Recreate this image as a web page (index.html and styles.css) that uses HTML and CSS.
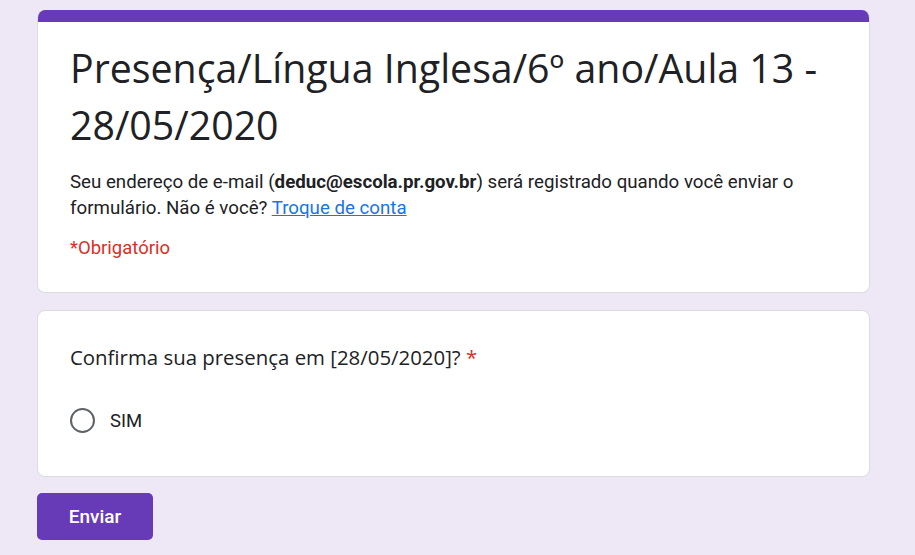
FILE: index.html
```html
<!DOCTYPE html>
<html lang="pt-BR">
<head>
<meta charset="utf-8">
<title>Presença/Língua Inglesa/6º ano/Aula 13 - 28/05/2020</title>
<link rel="stylesheet" href="styles.css">
</head>
<body>
<main class="form">
  <section class="card header-card">
    <div class="accent"></div>
    <div class="header-body">
      <h1 class="title">Presença/Língua Inglesa/6º ano/Aula 13 - 28/05/2020</h1>
      <p class="email">Seu endereço de e-mail (<b>deduc@escola.pr.gov.br</b>) será registrado quando você enviar o formulário. Não é você? <a class="switch" href="#">Troque de conta</a></p>
      <p class="required">*Obrigatório</p>
    </div>
  </section>
  <section class="card question-card">
    <div class="question">Confirma sua presença em [28/05/2020]? <span class="star">*</span></div>
    <label class="option">
      <span class="radio"></span>
      <span class="option-label">SIM</span>
    </label>
  </section>
  <div class="actions">
    <button class="submit" type="button">Enviar</button>
  </div>
</main>
</body>
</html>
```
FILE: styles.css
```css
html, body {
  margin: 0;
  padding: 0;
  background: #ede7f6;
}
body {
  font-family: Roboto, "Liberation Sans", sans-serif;
  color: #202124;
}
.form {
  width: 833px;
  margin-left: 37px;
  padding-top: 10px;
  display: flex;
  flex-direction: column;
}
.card {
  background: #fff;
  border: 1px solid #dadce0;
  border-radius: 8px;
  box-sizing: border-box;
}
.header-card {
  border-top: none;
  overflow: hidden;
  height: 283px;
}
.accent {
  height: 12px;
  background: #673ab7;
}
.header-body {
  padding: 18px 32px 0 32px;
}
.title {
  margin: 0;
  font-family: "Open Sans", sans-serif;
  font-weight: 400;
  font-size: 39.3px;
  line-height: 57px;
  color: #202124;
}
.email {
  margin: 15px 0 0 0;
  font-size: 18.7px;
  line-height: 26px;
  padding-right: 20px;
}
.email b {
  font-weight: 700;
}
.switch {
  color: #1a73e8;
  text-decoration: underline;
}
.required {
  margin: 14px 0 0 0;
  font-size: 18.5px;
  line-height: 26px;
  color: #d93025;
}
.question-card {
  margin-top: 17px;
  height: 167px;
  padding: 32px 32px 0 32px;
}
.question {
  font-family: "Open Sans", sans-serif;
  font-size: 20.4px;
  line-height: 28px;
  color: #202124;
}
.star {
  color: #d93025;
}
.option {
  display: flex;
  align-items: center;
  gap: 15px;
  margin-top: 37px;
}
.radio {
  width: 25px;
  height: 25px;
  border: 2.5px solid #5f6368;
  border-radius: 50%;
  box-sizing: border-box;
}
.option-label {
  font-size: 18.5px;
  color: #202124;
}
.actions {
  display: flex;
  margin-top: 16px;
}
.submit {
  width: 116px;
  height: 47px;
  border: none;
  border-radius: 5px;
  background: #673ab7;
  color: #fff;
  font-family: Roboto, "Liberation Sans", sans-serif;
  font-weight: 500;
  font-size: 19px;
}
```
